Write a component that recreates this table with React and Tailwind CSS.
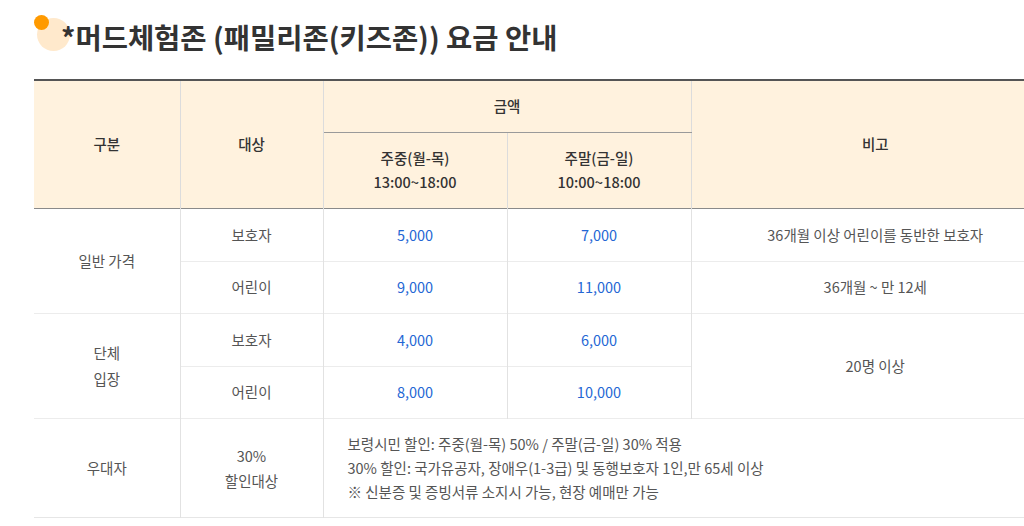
const font = { fontFamily: '"Noto Sans CJK KR", "Noto Sans", sans-serif' };

const th = 'border-r border-[#dcdcdc] text-center font-medium text-[#333] text-[14.5px]';
const td = 'border-r border-[#e2e2e2] text-center text-[14.5px] text-[#555]';
const price = 'border-r border-[#e2e2e2] text-center text-[14.5px] text-[#2466d4]';

const PriceTable = () => (
  <div className="overflow-hidden pl-[34px]">
    <table className="w-[1025px] table-fixed border-collapse border-t-2 border-t-[#555]">
      <colgroup>
        <col className="w-[146px]" />
        <col className="w-[143px]" />
        <col className="w-[184px]" />
        <col className="w-[184px]" />
        <col />
      </colgroup>
      <thead className="bg-[#fff2de]">
        <tr className="h-[52px]">
          <th rowSpan={2} className={th}>구분</th>
          <th rowSpan={2} className={th}>대상</th>
          <th colSpan={2} className={`${th} border-b border-b-[#9a9a9a]`}>금액</th>
          <th rowSpan={2} className="text-center font-medium text-[#333] text-[14.5px]">비고</th>
        </tr>
        <tr className="h-[76px] border-b border-b-[#8a8a8a]">
          <th className={`${th} leading-[24px]`}>주중(월-목)<br />13:00~18:00</th>
          <th className={`${th} leading-[24px]`}>주말(금-일)<br />10:00~18:00</th>
        </tr>
      </thead>
      <tbody>
        <tr className="h-[53px] border-b border-[#ececec]">
          <td rowSpan={2} className={td}>일반 가격</td>
          <td className={td}>보호자</td>
          <td className={price}>5,000</td>
          <td className={price}>7,000</td>
          <td className="text-center text-[14.5px] text-[#555]">36개월 이상 어린이를 동반한 보호자</td>
        </tr>
        <tr className="h-[52px] border-b border-[#ececec]">
          <td className={td}>어린이</td>
          <td className={price}>9,000</td>
          <td className={price}>11,000</td>
          <td className="text-center text-[14.5px] text-[#555]">36개월 ~ 만 12세</td>
        </tr>
        <tr className="h-[53px] border-b border-[#ececec]">
          <td rowSpan={2} className={`${td} leading-[26px]`}>단체<br />입장</td>
          <td className={td}>보호자</td>
          <td className={price}>4,000</td>
          <td className={price}>6,000</td>
          <td rowSpan={2} className="text-center text-[14.5px] text-[#555]">20명 이상</td>
        </tr>
        <tr className="h-[52px] border-b border-[#ececec]">
          <td className={td}>어린이</td>
          <td className={price}>8,000</td>
          <td className={price}>10,000</td>
        </tr>
        <tr className="h-[99px] border-b border-[#e6e6e6]">
          <td className={td}>우대자</td>
          <td className={`${td} leading-[25px]`}>30%<br />할인대상</td>
          <td colSpan={3} className="px-6 text-left text-[14.5px] text-[#555] leading-[24px]">
            보령시민 할인: 주중(월-목) 50% / 주말(금-일) 30% 적용<br />
            30% 할인: 국가유공자, 장애우(1-3급) 및 동행보호자 1인,만 65세 이상<br />
            ※ 신분증 및 증빙서류 소지시 가능, 현장 예매만 가능
          </td>
        </tr>
      </tbody>
    </table>
  </div>
);

export default function App() {
  return (
    <div className="w-[1024px] h-[526px] overflow-hidden bg-white" style={font}>
      <div className="relative h-[79px]">
        <span className="absolute left-[37px] top-[18px] h-[33px] w-[33px] rounded-full bg-[#ffe9cc]" />
        <span className="absolute left-[34px] top-[15px] h-[15px] w-[15px] rounded-full bg-[#ff9a00]" />
        <h2 className="relative pl-[61px] pt-[17px] text-[28.5px] font-bold leading-[40px] text-[#333]">
          *머드체험존 (패밀리존(키즈존)) 요금 안내
        </h2>
      </div>
      <PriceTable />
    </div>
  );
}
